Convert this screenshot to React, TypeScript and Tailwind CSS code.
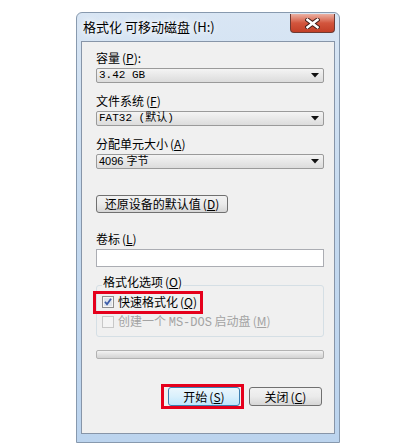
import React from 'react';

// Windows 7 "格式化 可移动磁盘" dialog

const cjk = "font-['Noto_Sans_CJK_SC','Noto_Sans',sans-serif]";
const mono = "font-['Liberation_Mono','Noto_Sans_CJK_SC',monospace]";

function Key({ k }: { k: string }) {
  return (
    <span className="ml-[2px]">
      (<span className="underline underline-offset-1">{k}</span>)
    </span>
  );
}

function Label({ children }: { children: React.ReactNode }) {
  return <div className={`${cjk} h-[14px] text-[12px] leading-[14px] text-black`}>{children}</div>;
}

function Arrow() {
  return (
    <svg width="8" height="5" viewBox="0 0 8 5" className="shrink-0">
      <path d="M0 0 H8 L4 4.5 Z" fill="#111" />
    </svg>
  );
}

function Combo({ children, className = '' }: { children: React.ReactNode; className?: string }) {
  return (
    <div className="flex h-[15px] items-center justify-between rounded-[2px] border border-[#9a9a9a] bg-gradient-to-b from-[#f4f4f4] to-[#dcdcdc] pl-[2px] pr-[4px]">
      <span className={`text-[11px] leading-[13px] text-black ${className}`}>{children}</span>
      <Arrow />
    </div>
  );
}

function CheckOn() {
  return (
    <svg width="12" height="12" viewBox="0 0 12 12" className="shrink-0">
      <rect x="0.5" y="0.5" width="11" height="11" fill="#f6f6f6" stroke="#8e8f8f" />
      <rect x="2" y="2" width="8" height="8" fill="#dfe5ec" />
      <path d="M3 5.8 L5 8.3 L9 2.8" fill="none" stroke="#3b5ca8" strokeWidth="1.8" />
    </svg>
  );
}

function CheckOff() {
  return (
    <svg width="12" height="12" viewBox="0 0 12 12" className="shrink-0">
      <rect x="0.5" y="0.5" width="11" height="11" fill="#f4f4f4" stroke="#c8c8c8" />
    </svg>
  );
}

function CloseButton() {
  return (
    <div className="flex h-[19px] w-[45px] items-center justify-center rounded-b-[4px] border border-t-0 border-[#6d3a33] bg-gradient-to-b from-[#eab0a3] via-[#d2553d] to-[#c23f27]">
      <svg width="15" height="11" viewBox="0 0 15 11">
        <path d="M2.5 1.8 L12.5 9.2 M12.5 1.8 L2.5 9.2" stroke="#3c1a16" strokeWidth="4.4" strokeLinecap="square" />
        <path d="M2.5 1.8 L12.5 9.2 M12.5 1.8 L2.5 9.2" stroke="#ffffff" strokeWidth="2.6" strokeLinecap="square" />
      </svg>
    </div>
  );
}

export default function App() {
  return (
    <div className="h-[448px] w-[404px] bg-white pl-[76px] pt-[12px]">
      {/* window frame */}
      <div className="flex h-[431px] w-[264px] flex-col rounded-t-[6px] border border-[#8799ae] bg-gradient-to-b from-[#d9e6f4] via-[#c4d9ef] to-[#bcd4ee] px-[4px] pb-[8px]">
        {/* title bar */}
        <div className="flex h-[28px] items-start justify-between">
          <div className={`${cjk} pl-[2px] pt-[6px] text-[13px] leading-[15px] text-black [text-shadow:0_0_6px_#ffffff,0_0_10px_#ffffff]`}>
            格式化 可移动磁盘 (H:)
          </div>
          <div className="pt-[1px]">
            <CloseButton />
          </div>
        </div>

        {/* client area */}
        <div className="flex flex-1 flex-col border border-[#8795a8] bg-[#f0f0f0] pl-[14px] pr-[10px] pt-[9px]">
          <Label>
            容量<Key k="P" />:
          </Label>
          <div className="mt-[3px]">
            <Combo className={mono}>3.42 GB</Combo>
          </div>

          <div className="mt-[11px]">
            <Label>
              文件系统<Key k="F" />
            </Label>
          </div>
          <div className="mt-[3px]">
            <Combo className={mono}>FAT32 (默认)</Combo>
          </div>

          <div className="mt-[11px]">
            <Label>
              分配单元大小<Key k="A" />
            </Label>
          </div>
          <div className="mt-[3px]">
            <Combo className="font-['Liberation_Sans','Noto_Sans_CJK_SC',sans-serif]">4096 字节</Combo>
          </div>

          <div className="mt-[26px]">
            <div className={`${cjk} flex h-[18px] w-[132px] items-center justify-center rounded-[3px] border border-[#707070] bg-gradient-to-b from-[#f2f2f2] via-[#ebebeb] to-[#d6d6d6] text-[12px] leading-[14px] text-black`}>
              还原设备的默认值<Key k="D" />
            </div>
          </div>

          <div className="mt-[19px]">
            <Label>
              卷标<Key k="L" />
            </Label>
          </div>
          <div className="mt-[3px] h-[18px] border border-[#abadb3] bg-white" />

          {/* format options group */}
          <fieldset className="mt-[8px] rounded-[3px] border border-[#d5dfe5] px-[5px] pb-[7px]">
            <legend className={`${cjk} px-[1px] pb-[6px] text-[12px] leading-[14px] text-black`}>
              格式化选项<Key k="O" />
            </legend>
            <div className="flex flex-col gap-[6px]">
              <div className="relative flex h-[14px] w-fit items-center gap-[4px]">
                <CheckOn />
                <span className={`${cjk} text-[12px] leading-[14px] text-black`}>
                  快速格式化<Key k="Q" />
                </span>
                <div className="absolute -bottom-[5px] -left-[9px] -right-[6px] -top-[4px] border-[3px] border-[#e5001c]" />
              </div>
              <div className="flex h-[14px] items-center gap-[4px]">
                <CheckOff />
                <span className={`${cjk} text-[12px] leading-[14px] text-[#a3a3a3]`}>
                  创建一个 <span className={mono}>MS-DOS</span> 启动盘<Key k="M" />
                </span>
              </div>
            </div>
          </fieldset>

          {/* progress bar */}
          <div className="mt-[13px] h-[9px] rounded-[2px] border border-[#b2b2b2] bg-gradient-to-b from-[#f3f3f3] via-[#e2e2e2] to-[#d3d3d3]" />

          {/* buttons */}
          <div className="mt-[28px] flex justify-end gap-[9px] pr-[2px]">
            <div className="relative">
              <div className={`${cjk} flex h-[19px] w-[72px] items-center justify-center rounded-[3px] border border-[#3c7fb1] bg-gradient-to-b from-[#eaf6fd] via-[#d9f0fc] to-[#bee6fd] text-[12px] leading-[14px] text-black`}>
                开始<Key k="S" />
              </div>
              <div className="absolute -bottom-[3px] -left-[7px] -right-[4px] -top-[3px] border-[3px] border-[#e5001c]" />
            </div>
            <div className={`${cjk} flex h-[19px] w-[73px] items-center justify-center rounded-[3px] border border-[#707070] bg-gradient-to-b from-[#f2f2f2] via-[#ebebeb] to-[#d6d6d6] text-[12px] leading-[14px] text-black`}>
              关闭<Key k="C" />
            </div>
          </div>
        </div>
      </div>
    </div>
  );
}
